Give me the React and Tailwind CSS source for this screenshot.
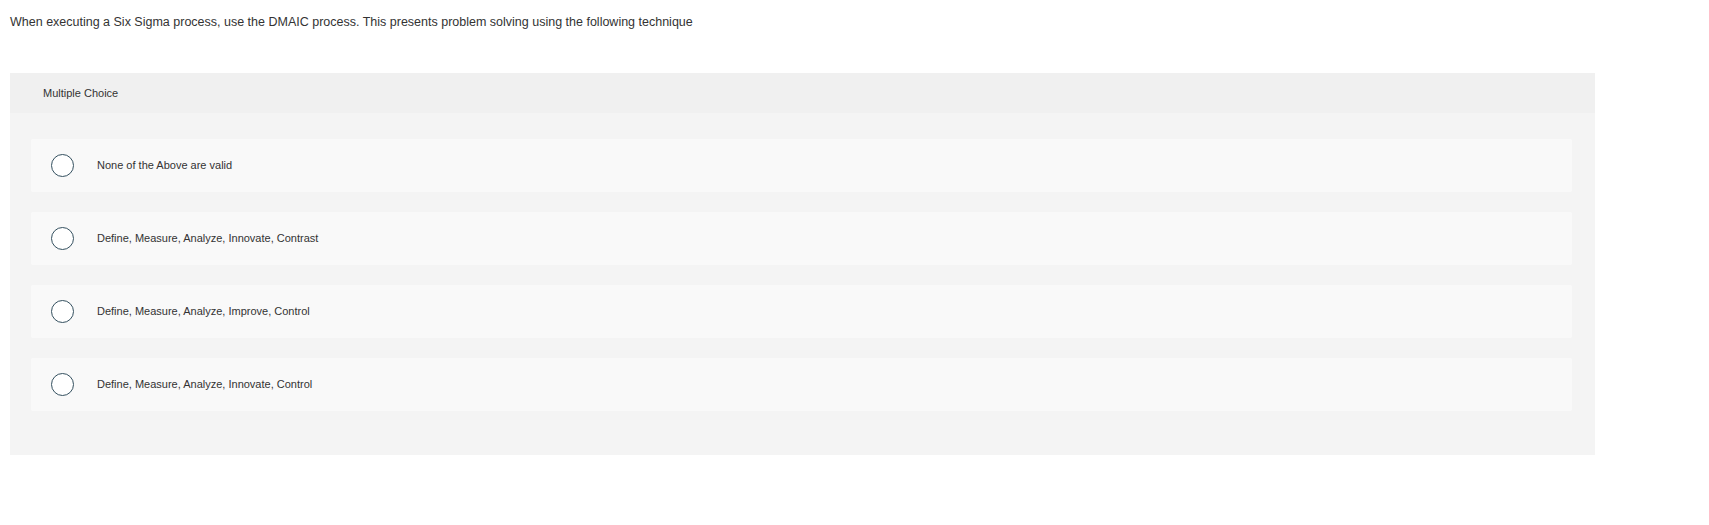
import React from "react";

const options = [
  "None of the Above are valid",
  "Define, Measure, Analyze, Innovate, Contrast",
  "Define, Measure, Analyze, Improve, Control",
  "Define, Measure, Analyze, Innovate, Control",
];

export default function App() {
  return (
    <div
      className="w-full h-[525px] bg-white text-[#333333]"
      style={{ fontFamily: '"Liberation Sans", Arial, sans-serif' }}
    >
      <div className="pt-[13px] pl-[10px] text-[12.5px] leading-[18px]">
        When executing a Six Sigma process, use the DMAIC process. This presents problem solving using the following technique
      </div>
      <div className="mt-[42px] ml-[10px] w-[1585px] bg-[#f4f4f4]">
        <div className="h-[40px] bg-[#f0f0f0] pl-[33px] flex items-center text-[11px]">
          Multiple Choice
        </div>
        <div className="pt-[26px] pb-[44px] pl-[21px] pr-[23px] flex flex-col gap-[20px]">
          {options.map((o) => (
            <div
              key={o}
              className="h-[53px] bg-[#f9f9f9] rounded-[2px] flex items-center pl-[20px]"
            >
              <div className="w-[23px] h-[23px] rounded-full border-[1.5px] border-[#34505f] bg-white shrink-0" />
              <div className="ml-[23px] text-[11px]">{o}</div>
            </div>
          ))}
        </div>
      </div>
    </div>
  );
}
